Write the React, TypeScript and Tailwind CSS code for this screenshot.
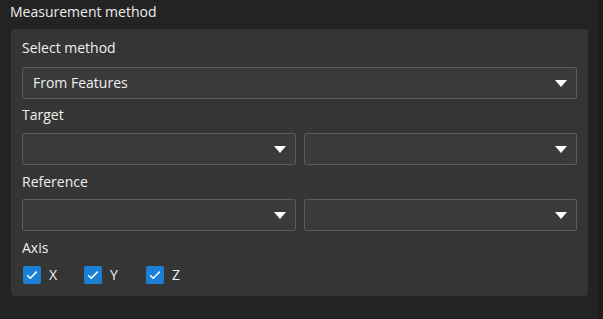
import React from "react";

const font = { fontFamily: '"Open Sans", "Noto Sans", sans-serif' };

function Arrow() {
  return (
    <svg width="12" height="7" viewBox="0 0 12 7" className="shrink-0">
      <path d="M0 0 H12 L6 7 Z" fill="#ffffff" />
    </svg>
  );
}

function Dropdown({ text, className }: { text?: string; className?: string }) {
  return (
    <div
      className={`h-[32px] flex items-center justify-between border border-[#5c5c5c] rounded-[2px] bg-[#3a3a3a] pl-[10px] pr-[9px] ${className ?? ""}`}
    >
      <span className="text-[14px] text-[#f0f0f0] leading-none">{text ?? ""}</span>
      <Arrow />
    </div>
  );
}

function Check({ label, className }: { label: string; className?: string }) {
  return (
    <div className={`flex items-center ${className ?? ""}`}>
      <div className="w-[18px] h-[18px] rounded-[2px] bg-[#1b7fd6] flex items-center justify-center">
        <svg width="12" height="10" viewBox="0 0 12 10">
          <path d="M1.2 5.2 L4.3 8.2 L10.8 1.6" stroke="#ffffff" strokeWidth="1.5" fill="none" />
        </svg>
      </div>
      <span className="ml-[8px] text-[14px] text-[#f0f0f0] leading-[20px]">{label}</span>
    </div>
  );
}

export default function App() {
  return (
    <div className="w-[603px] h-[319px] bg-[#232323] flex" style={font}>
      <div className="w-[598px] flex flex-col">
        <div className="pl-[10px] pt-[2px] h-[29px] text-[14px] leading-[20px] text-[#ececec]">
          Measurement method
        </div>
        <div className="ml-[11px] w-[577px] h-[267px] bg-[#353535] rounded-[4px] px-[11px] pt-[9px] flex flex-col">
          <div className="text-[14px] leading-[20px] text-[#f0f0f0]">Select method</div>
          <Dropdown text="From Features" className="mt-[9px]" />
          <div className="mt-[6px] text-[14px] leading-[20px] text-[#f0f0f0]">Target</div>
          <div className="mt-[8px] flex gap-[8px]">
            <Dropdown className="flex-1" />
            <Dropdown className="flex-1" />
          </div>
          <div className="mt-[7px] text-[14px] leading-[20px] text-[#f0f0f0]">Reference</div>
          <div className="mt-[7px] flex gap-[8px]">
            <Dropdown className="flex-1" />
            <Dropdown className="flex-1" />
          </div>
          <div className="mt-[7px] text-[14px] leading-[20px] text-[#f0f0f0]">Axis</div>
          <div className="mt-[7px] flex pl-[1px]">
            <Check label="X" className="w-[61px]" />
            <Check label="Y" className="w-[62px]" />
            <Check label="Z" />
          </div>
        </div>
      </div>
      <div className="w-[5px] bg-[#1d1d1d]" />
    </div>
  );
}
